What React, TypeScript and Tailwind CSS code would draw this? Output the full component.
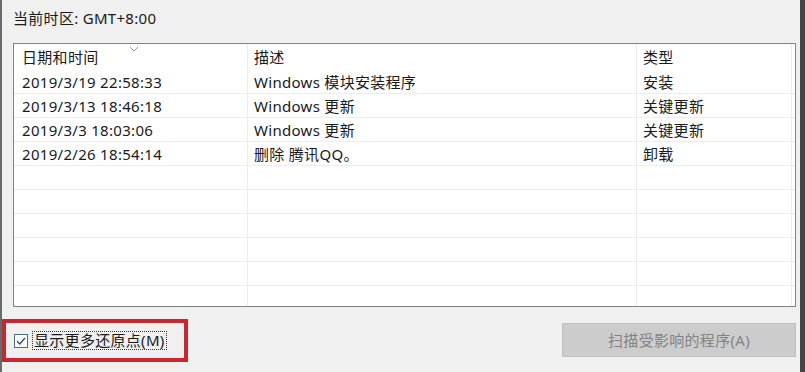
import React from "react";

const rows = [
  ["2019/3/19 22:58:33", "Windows 模块安装程序", "安装"],
  ["2019/3/13 18:46:18", "Windows 更新", "关键更新"],
  ["2019/3/3 18:03:06", "Windows 更新", "关键更新"],
  ["2019/2/26 18:54:14", "删除 腾讯QQ。", "卸载"],
  ["", "", ""],
  ["", "", ""],
  ["", "", ""],
  ["", "", ""],
  ["", "", ""],
  ["", "", ""],
];

const font = { fontFamily: '"Noto Sans", "Noto Sans CJK SC", sans-serif' };

export default function App() {
  return (
    <div
      className="w-[805px] h-[372px] bg-[#f0f0f0] flex overflow-hidden text-[15px] tracking-[0.3px] text-[#1a1a1a]"
      style={font}
    >
      <div className="w-[2px] h-full bg-[#6a6a6a]" />
      <div className="flex-1 flex flex-col">
        <div className="pl-[11px] pt-[8px] h-[43px] leading-[20px]">当前时区: GMT+8:00</div>
        <div className="ml-[11px] w-[783px] h-[264px] border border-[#828282] bg-white flex flex-col overflow-hidden">
          <div className="h-[26px] flex shrink-0 leading-[27px]">
            <div className="relative w-[234px] pl-[8px] border-r border-[#ececec]">
              日期和时间
              <svg className="absolute left-[115px] top-[2px]" width="10" height="6" viewBox="0 0 10 6">
                <path d="M1 1 L5 5 L9 1" fill="none" stroke="#9a9a9a" strokeWidth="1" />
              </svg>
            </div>
            <div className="w-[389px] pl-[6px] border-r border-[#ececec]">描述</div>
            <div className="w-[155px] pl-[6px] border-r border-[#ececec]">类型</div>
            <div className="flex-1" />
          </div>
          {rows.map((r, i) => (
            <div key={i} className="h-[24px] flex shrink-0 border-b border-[#ededed] leading-[24px]">
              <div className="w-[234px] pl-[8px] border-r border-[#ececec] whitespace-nowrap">{r[0]}</div>
              <div className="w-[389px] pl-[6px] border-r border-[#ececec] whitespace-nowrap">{r[1]}</div>
              <div className="w-[155px] pl-[6px] border-r border-[#ececec] whitespace-nowrap">{r[2]}</div>
              <div className="flex-1" />
            </div>
          ))}
        </div>
        <div className="flex items-start justify-between mt-[12px]">
          <div className="w-[186px] h-[43px] border-[4px] border-[#c9262e] flex items-center pl-[8px]">
            <div className="w-[14px] h-[14px] border border-[#4a6b80] bg-white flex items-center justify-center">
              <svg width="12" height="12" viewBox="0 0 12 12">
                <path d="M2 6.2 L4.8 9 L10 3" fill="none" stroke="#2c4a5e" strokeWidth="1.3" />
              </svg>
            </div>
            <div className="ml-[4px] border border-dotted border-[#333] px-[1px] leading-[17px] whitespace-nowrap">
              显示更多还原点(M)
            </div>
          </div>
          <div className="mt-[4px] mr-[4px] w-[234px] h-[34px] bg-[#cccccc] border border-[#bfbfbf] flex items-center justify-center text-[#838383]">
            扫描受影响的程序(A)
          </div>
        </div>
      </div>
      <div className="w-[5px] h-full bg-[#444444]" />
    </div>
  );
}
